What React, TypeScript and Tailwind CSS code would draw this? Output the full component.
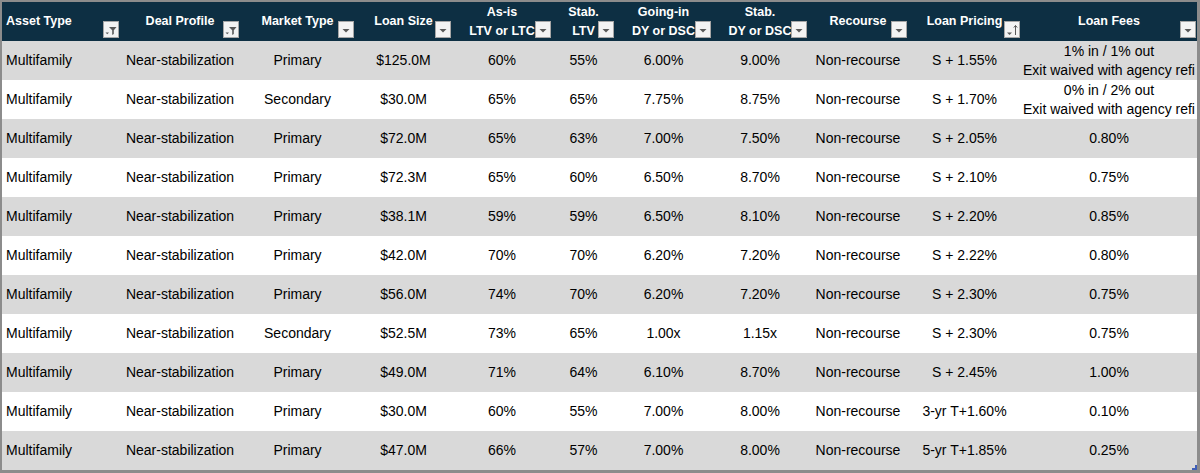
import React from 'react';

type Kind = 'drop' | 'filter' | 'sort';

const cols: { label: string[]; kind: Kind; align?: 'left' }[] = [
  { label: ['Asset Type'], kind: 'filter', align: 'left' },
  { label: ['Deal Profile'], kind: 'filter' },
  { label: ['Market Type'], kind: 'drop' },
  { label: ['Loan Size'], kind: 'drop' },
  { label: ['As-is', 'LTV or LTC'], kind: 'drop' },
  { label: ['Stab.', 'LTV'], kind: 'drop' },
  { label: ['Going-in', 'DY or DSC'], kind: 'drop' },
  { label: ['Stab.', 'DY or DSC'], kind: 'drop' },
  { label: ['Recourse'], kind: 'drop' },
  { label: ['Loan Pricing'], kind: 'sort' },
  { label: ['Loan Fees'], kind: 'drop' },
];

const rows: string[][] = [
  ['Primary', '$125.0M', '60%', '55%', '6.00%', '9.00%', 'S + 1.55%', '1% in / 1% out\nExit waived with agency refi'],
  ['Secondary', '$30.0M', '65%', '65%', '7.75%', '8.75%', 'S + 1.70%', '0% in / 2% out\nExit waived with agency refi'],
  ['Primary', '$72.0M', '65%', '63%', '7.00%', '7.50%', 'S + 2.05%', '0.80%'],
  ['Primary', '$72.3M', '65%', '60%', '6.50%', '8.70%', 'S + 2.10%', '0.75%'],
  ['Primary', '$38.1M', '59%', '59%', '6.50%', '8.10%', 'S + 2.20%', '0.85%'],
  ['Primary', '$42.0M', '70%', '70%', '6.20%', '7.20%', 'S + 2.22%', '0.80%'],
  ['Primary', '$56.0M', '74%', '70%', '6.20%', '7.20%', 'S + 2.30%', '0.75%'],
  ['Secondary', '$52.5M', '73%', '65%', '1.00x', '1.15x', 'S + 2.30%', '0.75%'],
  ['Primary', '$49.0M', '71%', '64%', '6.10%', '8.70%', 'S + 2.45%', '1.00%'],
  ['Primary', '$30.0M', '60%', '55%', '7.00%', '8.00%', '3-yr T+1.60%', '0.10%'],
  ['Primary', '$47.0M', '66%', '57%', '7.00%', '8.00%', '5-yr T+1.85%', '0.25%'],
];

function FilterButton({ kind }: { kind: Kind }) {
  return (
    <div className="absolute right-[1px] bottom-[3px] w-[16px] h-[17px] bg-[#f3f3f3] border border-[#a6a6a6]">
      <svg width="14" height="15" viewBox="0 0 14 15" className="block">
        {kind === 'drop' && <path d="M3.5 7h7L7 10.5z" fill="#595959" />}
        {kind === 'filter' && (
          <>
            <path d="M5 5h7.5L9.8 8.2v3.8l-1.6 0.9V8.2z" fill="#595959" />
            <path d="M1.5 10.5h3.5L3.25 12.3z" fill="#595959" />
          </>
        )}
        {kind === 'sort' && (
          <>
            <path d="M2 10.5h5l-2.5 2.5z" fill="#595959" />
            <path d="M10.5 3.5v9.5M8.8 5.5l1.7-2 1.7 2" stroke="#595959" strokeWidth="1" fill="none" />
          </>
        )}
      </svg>
    </div>
  );
}

export default function App() {
  const grid = 'grid grid-cols-[118px_120px_115px_97px_100px_63px_97px_96px_100px_113px_176px]';
  return (
    <div className="w-[1200px] h-[473px] bg-white border-l-2 border-t-2 border-r-[3px] border-b-[3px] border-[#8c8c8c] font-['Liberation_Sans',Arial,sans-serif] text-black overflow-hidden">
      <div className={`${grid} h-[39px] bg-[#0d2f43] text-white text-[12.5px] font-bold leading-[19px]`}>
        {cols.map((c, i) => (
          <div
            key={i}
            className={`relative flex flex-col justify-center ${c.align === 'left' ? 'items-start pl-1' : 'items-center'}`}
          >
            {c.label.map((l, j) => (
              <span key={j} className="whitespace-nowrap">{l}</span>
            ))}
            <FilterButton kind={c.kind} />
          </div>
        ))}
      </div>
      {rows.map((r, i) => {
        const cells = ['Multifamily', 'Near-stabilization', r[0], r[1], r[2], r[3], r[4], r[5], 'Non-recourse', r[6], r[7]];
        return (
          <div key={i} className={`${grid} h-[39px] text-[14px] leading-[19px] ${i % 2 === 0 ? 'bg-[#d9d9d9]' : 'bg-white'}`}>
            {cells.map((v, j) => (
              <div
                key={j}
                className={`relative flex flex-col justify-center whitespace-nowrap ${j === 0 ? 'items-start pl-1' : 'items-center'}`}
              >
                {v.split('\n').map((l, k) => (
                  <span key={k}>{l}</span>
                ))}
                {i === rows.length - 1 && j === 10 && (
                  <svg className="absolute right-0 bottom-0" width="5" height="5" viewBox="0 0 5 5">
                    <path d="M5 0v5H0V3h3V0z" fill="#3f5fb8" />
                  </svg>
                )}
              </div>
            ))}
          </div>
        );
      })}
    </div>
  );
}
